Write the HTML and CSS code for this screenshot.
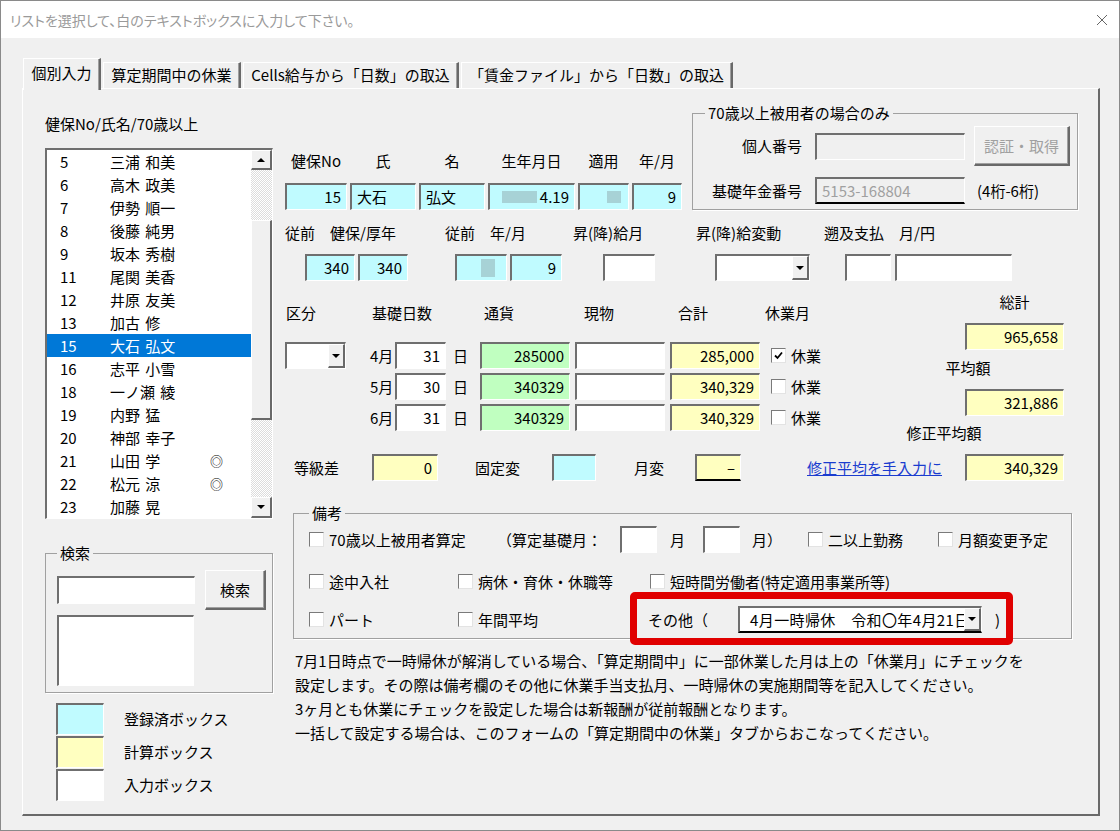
FILE: index.html
```html
<!DOCTYPE html>
<html lang="ja">
<head>
  <meta charset="UTF-8">
  <meta name="viewport" content="width=device-width, initial-scale=1.0">
  <title>算定基礎届 個別入力</title>
  <link rel="stylesheet" href="styles.css">
</head>
<body>
<div class="window">
  <div class="titlebar">
    <span class="title">リストを選択して、白のテキストボックスに入力して下さい。</span>
    <svg class="close" width="12" height="12" viewBox="0 0 12 12"><path d="M1 1L11 11M11 1L1 11" stroke="#666" stroke-width="1"/></svg>
  </div>

  <div class="client">
    <div class="tabs">
      <div class="tab active t1">個別入力</div>
      <div class="tab t2">算定期間中の休業</div>
      <div class="tab t3">Cells給与から「日数」の取込</div>
      <div class="tab t4">「賃金ファイル」から「日数」の取込</div>
    </div>

    <div class="page">
      <!-- left: employee list, search, colour keys -->
      <div class="left">
        <div class="caption">健保No/氏名/70歳以上</div>
        <div class="listbox">
          <ul class="items">
            <li><span class="no">5</span><span class="nm">三浦 和美</span></li>
            <li><span class="no">6</span><span class="nm">高木 政美</span></li>
            <li><span class="no">7</span><span class="nm">伊勢 順一</span></li>
            <li><span class="no">8</span><span class="nm">後藤 純男</span></li>
            <li><span class="no">9</span><span class="nm">坂本 秀樹</span></li>
            <li><span class="no">11</span><span class="nm">尾関 美香</span></li>
            <li><span class="no">12</span><span class="nm">井原 友美</span></li>
            <li><span class="no">13</span><span class="nm">加古 修</span></li>
            <li class="sel"><span class="no">15</span><span class="nm">大石 弘文</span></li>
            <li><span class="no">16</span><span class="nm">志平 小雪</span></li>
            <li><span class="no">18</span><span class="nm">一ノ瀬 綾</span></li>
            <li><span class="no">19</span><span class="nm">内野 猛</span></li>
            <li><span class="no">20</span><span class="nm">神部 幸子</span></li>
            <li><span class="no">21</span><span class="nm">山田 学</span><span class="mark">◎</span></li>
            <li><span class="no">22</span><span class="nm">松元 涼</span><span class="mark">◎</span></li>
            <li><span class="no">23</span><span class="nm">加藤 晃</span></li>
          </ul>
          <div class="vscroll">
            <div class="sbtn up"></div>
            <div class="track"><div class="thumb"></div></div>
            <div class="sbtn down"></div>
          </div>
        </div>

        <fieldset class="frame search">
          <legend>検索</legend>
          <div class="srow">
            <div class="tb white w138"></div>
            <div class="btn sbutton">検索</div>
          </div>
          <div class="tb white results"></div>
        </fieldset>

        <div class="keys">
          <div class="key"><span class="tb cyan swatch"></span>登録済ボックス</div>
          <div class="key"><span class="tb yellow swatch"></span>計算ボックス</div>
          <div class="key"><span class="tb white swatch"></span>入力ボックス</div>
        </div>
      </div>

      <!-- main form -->
      <div class="main">
        <div class="row-a">
          <div class="fields">
            <div class="fld w62"><span class="lb">健保No</span><div class="tb cyan num">15</div></div>
            <div class="fld w66"><span class="lb">氏</span><div class="tb cyan">大石</div></div>
            <div class="fld w66"><span class="lb">名</span><div class="tb cyan">弘文</div></div>
            <div class="fld w87"><span class="lb">生年月日</span><div class="tb cyan num"><span class="blur b35"></span>4.19</div></div>
            <div class="fld w51"><span class="lb">適用</span><div class="tb cyan num"><span class="blur b14"></span></div></div>
            <div class="fld w50"><span class="lb">年/月</span><div class="tb cyan num">9</div></div>
          </div>

          <fieldset class="frame elder">
            <legend>70歳以上被用者の場合のみ</legend>
            <div class="erow r1">
              <span class="elabel">個人番号</span>
              <div class="tb gray w150"></div>
              <div class="btn big">認証・取得</div>
            </div>
            <div class="erow r2">
              <span class="elabel">基礎年金番号</span>
              <div class="tb gray w150 line">5153-168804</div>
              <span class="hint">(4桁-6桁)</span>
            </div>
          </fieldset>
        </div>

        <div class="row-b">
          <div class="grp g1">
            <span class="lb">従前　健保/厚年</span>
            <div class="ins"><div class="tb cyan num w50">340</div><div class="tb cyan num w50">340</div></div>
          </div>
          <div class="grp g2">
            <span class="lb">従前　年/月</span>
            <div class="ins"><div class="tb cyan num w52"><span class="blur b14 tall"></span></div><div class="tb cyan num w52">9</div></div>
          </div>
          <div class="grp g3">
            <span class="lb">昇(降)給月</span>
            <div class="ins"><div class="tb white w52"></div></div>
          </div>
          <div class="grp g4">
            <span class="lb">昇(降)給変動</span>
            <div class="ins"><div class="combo w95"><span class="ctext"></span><span class="drop"></span></div></div>
          </div>
          <div class="grp g5">
            <span class="lb">遡及支払　月/円</span>
            <div class="ins"><div class="tb white w46"></div><div class="tb white w117"></div></div>
          </div>
        </div>

        <div class="row-c">
          <div class="calc">
            <div class="grid">
              <span class="hd h-kubun">区分</span>
              <span class="hd h-days">基礎日数</span>
              <span class="hd h-cur">通貨</span>
              <span class="hd h-kind">現物</span>
              <span class="hd h-sum">合計</span>
              <span class="hd h-off">休業月</span>

              <div class="combo w61 kubun"><span class="ctext"></span><span class="drop"></span></div>
              <span class="mon m1">4月</span><div class="tb white num w51 c3 m1">31</div><span class="day m1">日</span>
              <div class="tb green num w90 c5 m1">285000</div><div class="tb white w90 c6 m1"></div><div class="tb yellow num w90 c7 m1">285,000</div>
              <span class="chk c8 m1"><span class="cb on"><svg width="9" height="9" viewBox="0 0 9 9"><path d="M1 4.5L3.5 7L8 1.5" fill="none" stroke="#000" stroke-width="1.8"/></svg></span>休業</span>

              <span class="mon m2">5月</span><div class="tb white num w51 c3 m2">30</div><span class="day m2">日</span>
              <div class="tb green num w90 c5 m2">340329</div><div class="tb white w90 c6 m2"></div><div class="tb yellow num w90 c7 m2">340,329</div>
              <span class="chk c8 m2"><span class="cb"></span>休業</span>

              <span class="mon m3">6月</span><div class="tb white num w51 c3 m3">31</div><span class="day m3">日</span>
              <div class="tb green num w90 c5 m3">340329</div><div class="tb white w90 c6 m3"></div><div class="tb yellow num w90 c7 m3">340,329</div>
              <span class="chk c8 m3"><span class="cb"></span>休業</span>
            </div>

            <div class="diff">
              <span class="dl d1">等級差</span>
              <div class="tb yellow num w66">0</div>
              <span class="dl d2">固定変</span>
              <div class="tb cyan w44"></div>
              <span class="dl d3">月変</span>
              <div class="tb yellow num w46 line">–</div>
              <a class="link" href="#">修正平均を手入力に</a>
            </div>
          </div>

          <div class="totals">
            <span class="tl">総計</span>
            <div class="tb yellow num w99">965,658</div>
            <span class="tl t2">平均額</span>
            <div class="tb yellow num w99">321,886</div>
            <span class="tl t3">修正平均額</span>
            <div class="tb yellow num w99">340,329</div>
          </div>
        </div>

        <fieldset class="frame biko">
          <legend>備考</legend>
          <div class="brow">
            <span class="chk i188"><span class="cb"></span>70歳以上被用者算定</span>
            <span class="txt i123">（算定基礎月：</span>
            <div class="tb white w37"></div>
            <span class="txt i46 p13">月</span>
            <div class="tb white w37"></div>
            <span class="txt i68 p12">月）</span>
            <span class="chk i130"><span class="cb"></span>二以上勤務</span>
            <span class="chk"><span class="cb"></span>月額変更予定</span>
          </div>
          <div class="brow r2">
            <span class="chk i149"><span class="cb"></span>途中入社</span>
            <span class="chk i192"><span class="cb"></span>病休・育休・休職等</span>
            <span class="chk"><span class="cb"></span>短時間労働者(特定適用事業所等)</span>
          </div>
          <div class="brow r3">
            <span class="chk i149"><span class="cb"></span>パート</span>
            <span class="chk i190"><span class="cb"></span>年間平均</span>
            <div class="other">
              <span class="txt i90">その他（</span>
              <div class="combo w244 line"><span class="ctext wide">4月一時帰休　令和〇年4月21日</span><span class="drop"></span></div>
              <span class="txt close-paren">)</span>
            </div>
          </div>
        </fieldset>

        <div class="note">
          <p>7月1日時点で一時帰休が解消している場合、「算定期間中」に一部休業した月は上の「休業月」にチェックを</p>
          <p>設定します。その際は備考欄のその他に休業手当支払月、一時帰休の実施期間等を記入してください。</p>
          <p>3ヶ月とも休業にチェックを設定した場合は新報酬が従前報酬となります。</p>
          <p>一括して設定する場合は、このフォームの「算定期間中の休業」タブからおこなってください。</p>
        </div>
      </div>
    </div>
  </div>
</div>
</body>
</html>
```

FILE: styles.css
```css
*{
  box-sizing: border-box;
}
body{
  margin: 0;
  font-family: "Noto Sans CJK JP", "Noto Sans", sans-serif;
  font-size: 15px;
  line-height: 20px;
  color: #000;
  background: #fff;
}
p{
  margin: 0;
}

.window{
  width: 1120px;
  height: 831px;
  border: 1px solid #8a8a8a;
  background: #f0f0f0;
}
.titlebar{
  height: 37px;
  background: #fff;
  display: flex;
  align-items: center;
  padding-left: 9px;
}
.title{
  flex: 1;
  color: #9a9a9a;
  font-size: 14px;
  font-feature-settings: "palt";
}
.close{
  margin-right: 11px;
}

/* tabs */
.tabs{
  display: flex;
  align-items: flex-end;
  height: 50px;
  padding-left: 22px;
}
.tab{
  height: 26px;
  line-height: 24px;
  margin-left: 2px;
  text-align: center;
  white-space: nowrap;
  border-top: 1px solid #fff;
  border-left: 1px solid #fff;
  border-right: 2px solid #696969;
  box-shadow: inset -1px 0 #a0a0a0;
}
.tab.active{
  height: 32px;
  line-height: 28px;
  margin-left: 0;
  margin-bottom: -2px;
  position: relative;
  z-index: 1;
  background: #f0f0f0;
}
.t1{ width: 78px; }
.t2{ width: 138px; }
.t3{ width: 216px; }
.t4{ width: 272px; }

.page{
  margin-left: 21px;
  width: 1078px;
  height: 728px;
  display: flex;
  padding: 16px 0 0 22px;
  border-top: 1px solid #fff;
  border-left: 1px solid #fff;
  border-right: 2px solid #696969;
  border-bottom: 2px solid #696969;
}

/* common controls */
.tb{
  height: 27px;
  line-height: 24px;
  padding: 0 5px;
  white-space: nowrap;
  overflow: hidden;
  border-style: solid;
  border-width: 2px 1px 1px 2px;
  border-color: #6f6f6f #fff #fff #6f6f6f;
}
.tb.num{
  text-align: right;
}
.tb.line{
  border-bottom: 2px solid #000;
}
.cyan{ background: #c0fbff; }
.yellow{ background: #ffffc0; }
.green{ background: #c0ffc0; }
.white{ background: #fff; }
.gray{ background: #f0f0f0; color: #a0a0a0; }

.blur{
  display: inline-block;
  height: 12px;
  vertical-align: middle;
  background: #a7d2d6;
  margin-top: -3px;
}
.b35{ width: 35px; margin-right: 3px; }
.b14{ width: 14px; margin-right: 2px; }
.blur.tall{ height: 18px; margin-right: 6px; }

.btn{
  display: flex;
  align-items: center;
  justify-content: center;
  background: #f0f0f0;
  border-style: solid;
  border-width: 1px 2px 2px 1px;
  border-color: #fff #696969 #696969 #fff;
  box-shadow: inset -1px -1px #a0a0a0;
}

.combo{
  display: flex;
  height: 27px;
  background: #fff;
  border-style: solid;
  border-width: 2px 1px 1px 2px;
  border-color: #6f6f6f #fff #fff #6f6f6f;
}
.combo.line{
  border-bottom: 2px solid #000;
}
.ctext{
  flex: 1;
  overflow: hidden;
  white-space: nowrap;
  line-height: 23px;
  padding-left: 10px;
}
.ctext.wide{
  letter-spacing: 0.4px;
}
.drop{
  width: 17px;
  flex: none;
  display: flex;
  align-items: center;
  justify-content: center;
  background: #f0f0f0;
  border-style: solid;
  border-width: 1px 2px 2px 1px;
  border-color: #fff #696969 #696969 #fff;
}
.drop::after,
.sbtn.down::after{
  content: "";
  border-left: 4px solid transparent;
  border-right: 4px solid transparent;
  border-top: 4px solid #000;
}

.chk{
  display: flex;
  align-items: center;
  white-space: nowrap;
}
.cb{
  width: 15px;
  height: 15px;
  flex: none;
  margin-right: 5px;
  display: flex;
  align-items: center;
  justify-content: center;
  background: #fff;
  border-style: solid;
  border-width: 1px;
  border-color: #7a7a7a #e3e3e3 #e3e3e3 #7a7a7a;
}

.frame{
  margin: 0;
  padding: 0;
  min-width: 0;
  border: 1px solid #a0a0a0;
  box-shadow: 1px 1px 0 #fff;
}
.frame legend{
  line-height: 16px;
  padding: 0 3px;
}

/* widths */
.w37{ width: 37px; }
.w44{ width: 44px; }
.w46{ width: 46px; }
.w50{ width: 50px; }
.w51{ width: 51px; }
.w52{ width: 52px; }
.w61{ width: 61px; }
.w62{ width: 62px; }
.w66{ width: 66px; }
.w87{ width: 87px; }
.w90{ width: 90px; }
.w95{ width: 95px; }
.w99{ width: 99px; }
.w117{ width: 117px; }
.w138{ width: 138px; }
.w150{ width: 150px; }
.w244{ width: 244px; }

/* left column */
.left{
  width: 228px;
  flex: none;
}
.caption{
  margin-top: 9px;
}
.listbox{
  margin-top: 14px;
  height: 371px;
  display: flex;
  background: #fff;
  border-style: solid;
  border-width: 2px 1px 1px 2px;
  border-color: #6f6f6f #fff #fff #6f6f6f;
}
.items{
  list-style: none;
  margin: 0;
  padding: 0;
  flex: 1;
}
.items li{
  height: 23px;
  line-height: 23px;
  display: flex;
}
.items li.sel{
  background: #0078d7;
  color: #fff;
}
.no{
  width: 63px;
  padding-left: 13px;
}
.nm{
  width: 100px;
  word-spacing: 2px;
}
.mark{
  font-size: 13px;
}
.vscroll{
  width: 21px;
  flex: none;
  display: flex;
  flex-direction: column;
}
.sbtn{
  height: 20px;
  display: flex;
  align-items: center;
  justify-content: center;
  background: #f0f0f0;
  border-style: solid;
  border-width: 1px 2px 2px 1px;
  border-color: #fff #696969 #696969 #fff;
}
.sbtn.up::after{
  content: "";
  border-left: 4px solid transparent;
  border-right: 4px solid transparent;
  border-bottom: 4px solid #000;
}
.sbtn.down{
  height: 21px;
}
.track{
  flex: 1;
  padding-top: 50px;
  background: repeating-conic-gradient(#fff 0 25%, #dcdcdc 0 50%) 0 0 / 2px 2px;
}
.thumb{
  height: 200px;
  background: #f0f0f0;
  border-style: solid;
  border-width: 1px 2px 2px 1px;
  border-color: #fff #696969 #696969 #fff;
}

.search{
  margin-top: 26px;
  height: 148px;
  padding: 9px 0 0 11px;
}
.srow{
  display: flex;
  align-items: center;
}
.srow .tb{
  height: 28px;
}
.sbutton{
  width: 61px;
  height: 40px;
  margin-left: 10px;
}
.results{
  width: 137px;
  height: 71px;
  margin-top: 5px;
}
.keys{
  margin-top: 10px;
}
.key{
  display: flex;
  align-items: center;
  height: 32px;
  margin-bottom: 1px;
}
.swatch{
  width: 48px;
  height: 32px;
  margin: 0 20px 0 11px;
}

/* main area */
.main{
  margin-left: 12px;
  flex: 1;
}
.row-a{
  display: flex;
  align-items: flex-end;
}
.fields{
  display: flex;
  gap: 3px;
}
.fld{
  display: flex;
  flex-direction: column;
  align-items: center;
}
.fld .lb{
  margin-bottom: 12px;
  white-space: nowrap;
}
.fld .tb{
  width: 100%;
}
.elder{
  margin-left: 10px;
  width: 386px;
  height: 105px;
  padding: 5px 0 0 0;
}
.elder legend{
  margin-left: 12px;
}
.erow{
  display: flex;
  align-items: center;
}
.erow.r1{
  height: 40px;
}
.erow.r2{
  margin-top: 11px;
}
.elabel{
  width: 109px;
  margin-right: 13px;
  text-align: right;
}
.big{
  width: 96px;
  height: 40px;
  margin-left: 9px;
  color: #a0a0a0;
}
.hint{
  margin-left: 12px;
}

.row-b{
  display: flex;
  margin-top: 13px;
}
.grp .lb{
  display: block;
  white-space: nowrap;
}
.ins{
  display: flex;
  gap: 3px;
  margin-top: 11px;
}
.g1{ width: 160px; }
.g1 .ins{ padding-left: 20px; }
.g2{ width: 128px; }
.g2 .ins{ padding-left: 10px; }
.g3{ width: 123px; }
.g3 .ins{ padding-left: 30px; }
.g4{ width: 128px; }
.g4 .ins{ padding-left: 19px; }
.g5 .ins{ padding-left: 21px; gap: 4px; }

.row-c{
  display: flex;
  margin-top: 11px;
}
.calc{
  width: 680px;
  flex: none;
  padding-top: 11px;
}
.grid{
  display: grid;
  grid-template-columns: 85px 25px 51px 34px 95px 95px 95px 100px;
  grid-template-rows: 35px 27px 27px 27px;
  row-gap: 4px;
}
.hd{
  grid-row: 1;
  align-self: start;
  white-space: nowrap;
}
.h-kubun{ grid-column: 1; padding-left: 1px; }
.h-days{ grid-column: 2 / 4; padding-left: 2px; }
.h-cur{ grid-column: 5; padding-left: 4px; }
.h-kind{ grid-column: 6; padding-left: 9px; }
.h-sum{ grid-column: 7; padding-left: 8px; }
.h-off{ grid-column: 8; }
.kubun{
  grid-column: 1;
  grid-row: 2;
}
.m1{ grid-row: 2; }
.m2{ grid-row: 3; }
.m3{ grid-row: 4; }
.mon{
  grid-column: 2;
  line-height: 27px;
}
.c3{ grid-column: 3; }
.day{
  grid-column: 4;
  line-height: 27px;
  padding-left: 7px;
}
.c5{ grid-column: 5; }
.c6{ grid-column: 6; }
.c7{ grid-column: 7; }
.c8{
  grid-column: 8;
  padding-left: 6px;
}

.diff{
  display: flex;
  align-items: center;
  height: 27px;
  margin-top: 23px;
}
.dl{
  flex: none;
}
.d1{ width: 87px; padding-left: 9px; }
.d2{ width: 114px; padding-left: 37px; }
.d3{ width: 99px; padding-left: 38px; }
.link{
  margin-left: 66px;
  color: #1a3ccf;
  text-decoration: underline;
}

.totals{
  width: 99px;
  display: flex;
  flex-direction: column;
  align-items: center;
}
.totals .tb{
  margin-top: 11px;
}
.t2{ margin-top: 8px; }
.t3{ margin-top: 7px; }

.biko{
  margin: 24px 0 0 8px;
  width: 779px;
  padding: 5px 0 5px 15px;
}
.brow{
  display: flex;
  align-items: center;
  height: 27px;
}
.brow.r2{
  margin-top: 15px;
}
.brow.r3{
  margin-top: 11px;
}
.brow .chk,
.brow .txt{
  flex: none;
  white-space: nowrap;
}
.i46{ width: 46px; }
.i68{ width: 68px; }
.i90{ width: 90px; }
.i123{ width: 123px; }
.i130{ width: 130px; }
.i149{ width: 149px; }
.i188{ width: 188px; }
.i190{ width: 190px; }
.i192{ width: 192px; }
.p12{ padding-left: 12px; }
.p13{ padding-left: 13px; }

.other{
  display: flex;
  align-items: center;
  height: 27px;
  width: 352px;
  position: relative;
}
.other::before{
  content: "";
  position: absolute;
  top: -14px;
  bottom: -12px;
  left: -18px;
  right: -13px;
  border: 7px solid #e00000;
  border-radius: 5px;
}
.close-paren{
  margin-left: 13px;
}

.note{
  margin: 10px 0 0 10px;
  line-height: 24px;
  white-space: nowrap;
}
```
